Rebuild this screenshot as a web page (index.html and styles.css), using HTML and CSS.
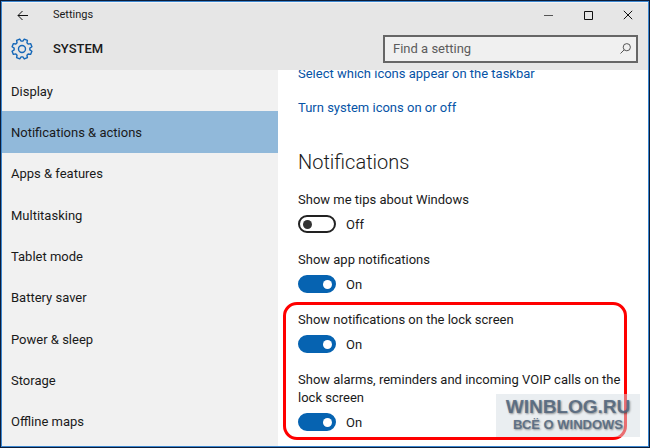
FILE: index.html
```
<!DOCTYPE html>
<html lang="en">
<head>
    <meta charset="UTF-8">
    <meta name="viewport" content="width=device-width, initial-scale=1.0">
    <title>Settings</title>
    <link rel="stylesheet" href="styles.css">
</head>
<body>
    <div class="window">
        <header class="header">
            <div class="title-bar">
                <button class="icon-button back-button" aria-label="Back">
                    <svg width="11" height="11" viewBox="0 0 11 11"><path d="M11 5.5H1M5.5 1L1 5.5L5.5 10"/></svg>
                </button>
                <span class="title">Settings</span>
                <div class="window-buttons">
                    <button class="icon-button minimize" aria-label="Minimize">
                        <svg width="10" height="10" viewBox="0 0 10 10"><path d="M1 5.5H10"/></svg>
                    </button>
                    <button class="icon-button" aria-label="Maximize">
                        <svg width="10" height="10" viewBox="0 0 10 10"><path d="M1.5 1.5H9.5V9.5H1.5Z"/></svg>
                    </button>
                    <button class="icon-button" aria-label="Close">
                        <svg width="10" height="10" viewBox="0 0 10 10"><path d="M.8 .8L9.2 9.2M9.2 .8L.8 9.2"/></svg>
                    </button>
                </div>
            </div>
            <div class="page-bar">
                <svg class="gear" width="22" height="22" viewBox="-11 -11 22 22">
                    <circle r="3.5"/>
                    <path transform="rotate(22.5)" d="M-1.7 -10H1.7L2.2 -7.6L3.8 -6.9L5.9 -8.3L8.3 -5.9L6.9 -3.8L7.6 -2.2L10 -1.7V1.7L7.6 2.2L6.9 3.8L8.3 5.9L5.9 8.3L3.8 6.9L2.2 7.6L1.7 10H-1.7L-2.2 7.6L-3.8 6.9L-5.9 8.3L-8.3 5.9L-6.9 3.8L-7.6 2.2L-10 1.7V-1.7L-7.6 -2.2L-6.9 -3.8L-8.3 -5.9L-5.9 -8.3L-3.8 -6.9L-2.2 -7.6Z"/>
                </svg>
                <h1>SYSTEM</h1>
                <div class="search">
                    <input type="text" placeholder="Find a setting" aria-label="Find a setting">
                    <svg width="11" height="11" viewBox="0 0 11 11"><circle cx="6.8" cy="4.2" r="3.6"/><path d="M4.2 6.8L.5 10.5"/></svg>
                </div>
            </div>
        </header>
        <div class="body">
            <nav class="sidebar">
                <a href="#">Display</a>
                <a href="#" class="active">Notifications &amp; actions</a>
                <a href="#">Apps &amp; features</a>
                <a href="#">Multitasking</a>
                <a href="#">Tablet mode</a>
                <a href="#">Battery saver</a>
                <a href="#">Power &amp; sleep</a>
                <a href="#">Storage</a>
                <a href="#">Offline maps</a>
            </nav>
            <main class="content">
                <a href="#" class="link">Select which icons appear on the taskbar</a>
                <a href="#" class="link">Turn system icons on or off</a>
                <h2>Notifications</h2>
                <div class="setting">
                    <label for="tips">Show me tips about Windows</label>
                    <div class="toggle">
                        <input type="checkbox" id="tips">
                        <span>Off</span>
                    </div>
                </div>
                <div class="setting">
                    <label for="apps">Show app notifications</label>
                    <div class="toggle">
                        <input type="checkbox" id="apps" checked>
                        <span>On</span>
                    </div>
                </div>
                <div class="highlight">
                    <div class="setting">
                        <label for="lock">Show notifications on the lock screen</label>
                        <div class="toggle">
                            <input type="checkbox" id="lock" checked>
                            <span>On</span>
                        </div>
                    </div>
                    <div class="setting">
                        <label for="alarms">Show alarms, reminders and incoming VOIP calls on the lock screen</label>
                        <div class="toggle">
                            <input type="checkbox" id="alarms" checked>
                            <span>On</span>
                        </div>
                    </div>
                </div>
            </main>
        </div>
        <div class="watermark">
            <div class="site">WINBLOG.RU</div>
            <div class="slogan">ВСЁ О WINDOWS</div>
        </div>
    </div>
    <script>
        document.querySelectorAll('.toggle input').forEach(input => {
            input.addEventListener('change', function () {
                input.nextElementSibling.textContent = input.checked ? 'On' : 'Off';
            });
        });
    </script>
</body>
</html>
```
FILE: styles.css
```
* {
    box-sizing: border-box;
}
body {
    margin: 0;
    font-family: Roboto, "Noto Sans", sans-serif;
    font-size: 13px;
    line-height: 18px;
    color: #1a1a1a;
    background-color: #0c1c38;
}
.window {
    position: relative;
    display: flex;
    flex-direction: column;
    height: calc(100vh - 2px);
    margin: 1px;
    border: 1px solid #3c87d0;
    background-color: #fff;
}
.header {
    flex: none;
    background-color: #e6e6e6;
    border-top: 1px solid #f4f4f4;
}
.title-bar {
    display: flex;
    align-items: center;
    height: 24px;
}
.icon-button {
    display: flex;
    align-items: center;
    justify-content: center;
    width: 40px;
    height: 24px;
    padding: 0;
    border: none;
    background: none;
}
.icon-button:hover {
    background-color: #d0d0d0;
}
svg {
    fill: none;
    stroke: #111;
}
.minimize svg {
    stroke: #555;
}
.title {
    margin-left: 11px;
    font-size: 11px;
}
.window-buttons {
    display: flex;
    margin-left: auto;
}
.page-bar {
    display: flex;
    align-items: center;
    height: 43px;
    padding: 0 10px 0 9px;
}
.gear {
    stroke: #1467b8;
    stroke-width: 1.4;
    stroke-linejoin: round;
}
h1 {
    margin: 0 0 0 20px;
    font-size: 13px;
    font-weight: 500;
}
.search {
    flex: 0 1 255px;
    display: flex;
    align-items: center;
    height: 28px;
    margin-left: auto;
    padding: 0 5px 0 8px;
    border: 2px solid #666;
    background-color: #f0f0f0;
}
.search input {
    flex: 1;
    min-width: 0;
    padding: 0;
    border: none;
    outline: none;
    background: none;
    font: inherit;
}
.search input::placeholder {
    color: #5c5c5c;
    opacity: 1;
}
.search svg {
    stroke: #555;
}
.body {
    flex: 1;
    display: flex;
    min-height: 0;
}
.sidebar {
    flex: none;
    display: flex;
    flex-direction: column;
    width: 276px;
    padding-bottom: 4px;
    background-color: #f1f1f1;
}
.sidebar a {
    flex: 1;
    display: flex;
    align-items: center;
    padding: 2px 0 0 9px;
    color: #1a1a1a;
    text-decoration: none;
}
.sidebar .active {
    background-color: #91b9da;
}
.content {
    flex: 1;
    min-width: 0;
    overflow: hidden;
    padding: 0 21px 0 20px;
}
.link {
    display: block;
    margin-bottom: 16px;
    color: #0653a6;
    text-decoration: none;
}
.link:first-child {
    margin-top: -5px;
}
h2 {
    margin: 31px 0 15px;
    font-size: 20px;
    font-weight: 300;
    line-height: 28px;
}
.setting {
    margin-bottom: 18px;
}
.setting label {
    display: block;
}
.toggle {
    display: flex;
    align-items: center;
    height: 18px;
    margin-top: 6px;
}
.toggle span {
    padding-top: 2px;
}
.toggle input {
    appearance: none;
    display: flex;
    align-items: center;
    width: 38px;
    height: 18px;
    margin: 0 10px 0 0;
    padding: 0 3px;
    border: 2px solid #222;
    border-radius: 9px;
}
.toggle input::before {
    content: "";
    width: 9px;
    height: 9px;
    border-radius: 50%;
    background-color: #333;
}
.toggle input:checked {
    justify-content: flex-end;
    padding: 0 2px;
    border-color: #0663b1;
    background-color: #0663b1;
}
.toggle input:checked::before {
    background-color: #fff;
}
/* red frame around the lock screen options */
.highlight {
    margin: -9px 0 0 -15px;
    padding: 6px 0 6px 12px;
    border: 3px solid #f00;
    border-radius: 14px;
}
.highlight .setting:last-child {
    margin-bottom: 0;
}
.watermark {
    position: absolute;
    right: 8px;
    bottom: 9px;
    width: 144px;
    height: 43px;
    padding-top: 3px;
    background-color: rgba(214, 221, 227, 0.5);
    color: rgba(79, 99, 122, 0.85);
    font-family: "Liberation Sans", Arial, sans-serif;
    font-weight: bold;
    text-align: center;
    text-shadow: 1px 1px 2px rgba(0, 0, 0, 0.4);
}
.site {
    font-size: 19px;
    line-height: 20px;
}
.slogan {
    font-size: 13px;
    line-height: 16px;
}
```
